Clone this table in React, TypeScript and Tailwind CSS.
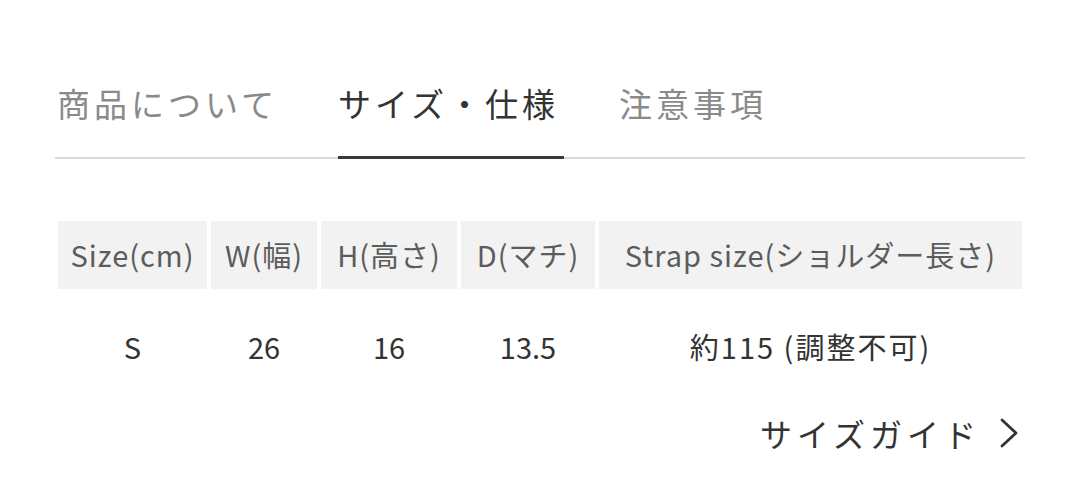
import React from "react";

const font = { fontFamily: '"Noto Sans CJK JP", "Noto Sans", sans-serif' };

export default function App() {
  const headers = [
    { label: "Size(cm)", w: "w-[149px]" },
    { label: "W(幅)", w: "w-[106px]" },
    { label: "H(高さ)", w: "w-[136px]" },
    { label: "D(マチ)", w: "w-[134px]" },
    { label: "Strap size(ショルダー長さ)", w: "w-[423px]" },
  ];
  const values = ["S", "26", "16", "13.5", "約115 (調整不可)"];
  return (
    <div className="w-[1080px] h-[495px] bg-white overflow-hidden" style={font}>
      <div className="ml-[55px] w-[970px] pt-[80px]">
        <div className="flex border-b-[2px] border-[#d9d9d9] h-[79px]">
          <div className="text-[33px] leading-[46px] tracking-[4px] text-[#8a8a8a] ml-[2px] h-full">商品について</div>
          <div className="ml-[60px] h-full flex flex-col justify-between">
            <div className="text-[33px] leading-[46px] tracking-[4px] text-[#333]">サイズ・仕様</div>
            <div className="h-[3px] bg-[#3a3a3a] mb-[-2px] w-[226px]" />
          </div>
          <div className="ml-[55px] text-[33px] leading-[46px] tracking-[4px] text-[#8a8a8a]">注意事項</div>
        </div>

        <div className="mt-[62px] ml-[3px] flex gap-[4px]">
          {headers.map((h) => (
            <div
              key={h.label}
              className={`${h.w} h-[68px] bg-[#f2f2f2] flex items-center justify-center text-[29px] tracking-[1px] text-[#5c5c5c] whitespace-nowrap`}
            >
              {h.label}
            </div>
          ))}
        </div>
        <div className="ml-[3px] flex gap-[4px]">
          {headers.map((h, i) => (
            <div
              key={h.label}
              className={`${h.w} h-[116px] flex items-center justify-center text-[29px] text-[#333] whitespace-nowrap ${i === 4 ? "tracking-[2px]" : ""}`}
            >
              {values[i]}
            </div>
          ))}
        </div>
        <div className="flex justify-end items-center mt-[6px] pr-[6px] h-[44px]">
          <span className="text-[32px] tracking-[5px] text-[#333]">サイズガイド</span>
          <svg className="ml-[18px]" width="20" height="30" viewBox="0 0 20 30" fill="none">
            <path d="M3 2 L17 15 L3 28" stroke="#333" strokeWidth="2.8" strokeLinecap="round" strokeLinejoin="round" />
          </svg>
        </div>
      </div>
    </div>
  );
}
